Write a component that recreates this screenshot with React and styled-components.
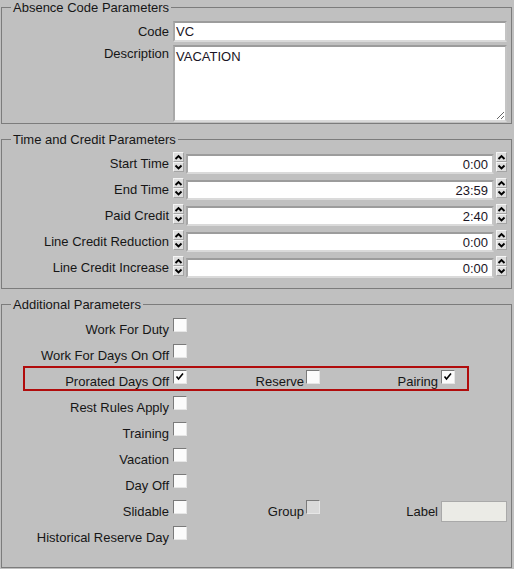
import React from 'react';
import styled, { createGlobalStyle } from 'styled-components';

const GlobalStyle = createGlobalStyle`
  html, body {
    margin: 0;
    padding: 0;
    background: #c0c0c0;
  }
  body {
    font-family: "Liberation Sans", Arial, sans-serif;
    font-size: 13px;
    line-height: 15px;
    color: #161616;
  }
  * { box-sizing: border-box; }
`;

const timeRows = [
  { label: 'Start Time', value: '0:00' },
  { label: 'End Time', value: '23:59' },
  { label: 'Paid Credit', value: '2:40' },
  { label: 'Line Credit Reduction', value: '0:00' },
  { label: 'Line Credit Increase', value: '0:00' },
];

function Chevron({ down }) {
  return (
    <svg width="9" height="7" viewBox="0 0 9 7">
      <polyline
        points={down ? '1.5,1.5 4.5,4.5 7.5,1.5' : '1.5,5 4.5,2 7.5,5'}
        fill="none"
        stroke="#000"
        strokeWidth="1.9"
      />
    </svg>
  );
}

function Spinner({ $right }) {
  return (
    <SpinBox $right={$right}>
      <SpinButton><Chevron /></SpinButton>
      <SpinButton><Chevron down /></SpinButton>
    </SpinBox>
  );
}

function Check({ checked, disabled }) {
  return (
    <CheckBox $disabled={disabled}>
      {checked && (
        <svg width="12" height="12" viewBox="0 0 12 12">
          <polyline points="2.5,5.5 4.5,8 9,2.5" fill="none" stroke="#000" strokeWidth="1.6" />
        </svg>
      )}
    </CheckBox>
  );
}

function App() {
  return (
    <>
      <GlobalStyle />
      <Page>
        <Group>
          <Legend>Absence Code Parameters</Legend>
          <CodeGrid>
            <FieldLabel>Code</FieldLabel>
            <TextBox readOnly value="VC" />
            <FieldLabel $top>Description</FieldLabel>
            <TextArea readOnly value="VACATION" />
          </CodeGrid>
        </Group>

        <Group $pb={10}>
          <Legend>Time and Credit Parameters</Legend>
          <TimeList>
            {timeRows.map(row => (
              <TimeRow key={row.label}>
                <FieldLabel>{row.label}</FieldLabel>
                <Spinner />
                <TimeBox readOnly value={row.value} />
                <Spinner $right />
              </TimeRow>
            ))}
          </TimeList>
        </Group>

        <Group $pb={15}>
          <Legend>Additional Parameters</Legend>
          <CheckList>
            <CheckRow>
              <CheckLabel>Work For Duty</CheckLabel>
              <Check />
            </CheckRow>
            <CheckRow>
              <CheckLabel>Work For Days On Off</CheckLabel>
              <Check />
            </CheckRow>
            <CheckRow $framed>
              <CheckLabel>Prorated Days Off</CheckLabel>
              <Check checked />
              <CheckLabel $pad={2}>Reserve</CheckLabel>
              <Check />
              <CheckLabel $pad={3}>Pairing</CheckLabel>
              <Check checked />
            </CheckRow>
            <CheckRow>
              <CheckLabel>Rest Rules Apply</CheckLabel>
              <Check />
            </CheckRow>
            <CheckRow>
              <CheckLabel>Training</CheckLabel>
              <Check />
            </CheckRow>
            <CheckRow>
              <CheckLabel>Vacation</CheckLabel>
              <Check />
            </CheckRow>
            <CheckRow>
              <CheckLabel>Day Off</CheckLabel>
              <Check />
            </CheckRow>
            <CheckRow>
              <CheckLabel>Slidable</CheckLabel>
              <Check />
              <CheckLabel $pad={2}>Group</CheckLabel>
              <Check disabled />
              <CheckLabel $pad={3}>Label</CheckLabel>
              <DisabledBox readOnly value="" />
            </CheckRow>
            <CheckRow>
              <CheckLabel>Historical Reserve Day</CheckLabel>
              <Check />
            </CheckRow>
          </CheckList>
        </Group>
      </Page>
    </>
  );
}

const Page = styled.div`
  width: 514px;
  padding: 0 2px 0 1px;
  display: flex;
  flex-direction: column;
  gap: 8px;
`;

const Group = styled.fieldset`
  margin: 0;
  padding: 0 3px ${p => p.$pb ?? 1}px 0;
  border: 1px solid #7c7c7c;
  min-width: 0;
`;

const Legend = styled.legend`
  margin-left: 9px;
  padding: 0 2px;
  font-size: 13px;
  line-height: 15px;
  color: #161616;
`;

const CodeGrid = styled.div`
  display: grid;
  grid-template-columns: 171px 1fr;
  row-gap: 3px;
  padding-top: 6px;
`;

const FieldLabel = styled.div`
  text-align: right;
  padding-right: 4px;
  white-space: nowrap;
  align-self: ${p => (p.$top ? 'start' : 'center')};
  padding-top: ${p => (p.$top ? '1px' : '0')};
`;

const inputBorder = `
  border-style: solid;
  border-width: 2px;
  border-color: #9c9c9c #c4c4c4 #dadada #a8a8a8;
  background: #fff;
  font-family: "Liberation Sans", Arial, sans-serif;
  font-size: 13px;
  color: #1a1424;
  outline: none;
  margin: 0;
`;

const TextBox = styled.input`
  ${inputBorder}
  height: 21px;
  width: 334px;
  padding: 0 1px;
`;

const TextArea = styled.textarea`
  ${inputBorder}
  height: 77px;
  width: 334px;
  padding: 2px 1px;
  resize: both;
  line-height: 15px;
`;

const TimeList = styled.div`
  display: flex;
  flex-direction: column;
  gap: 4px;
  padding-top: 5px;
`;

const TimeRow = styled.div`
  display: grid;
  grid-template-columns: 171px 13px 308px 13px;
  height: 22px;
  align-items: center;
`;

const TimeBox = styled.input`
  ${inputBorder}
  height: 20px;
  width: 308px;
  padding: 0 4px 0 2px;
  text-align: right;
  align-self: start;
  margin-top: 2px;
`;

const SpinBox = styled.div`
  display: flex;
  flex-direction: column;
  align-self: start;
  width: 12px;
  margin-left: ${p => (p.$right ? '2px' : '0')};
`;

const SpinButton = styled.div`
  height: 10px;
  width: 11px;
  display: flex;
  align-items: center;
  justify-content: center;
  background: #dedede;
  border-top: 1px solid #f4f4f4;
  border-left: 1px solid #f4f4f4;
  border-bottom: 1px solid #a4a4a4;
  border-right: 1px solid #a4a4a4;
`;

const CheckList = styled.div`
  display: flex;
  flex-direction: column;
  padding-top: 6px;
`;

const CheckRow = styled.div`
  display: grid;
  grid-template-columns: ${p => (p.$framed ? '148px' : '171px')} 14px 119px 14px 121px 66px;
  align-items: start;
  height: ${p => (p.$framed ? '25px' : '26px')};
  ${p => p.$framed && `
    margin: -4px 0 5px 21px;
    width: 446px;
    border: 2px solid #b10c0c;
    padding-top: 2px;
  `}
`;

const CheckLabel = styled.div`
  text-align: right;
  white-space: nowrap;
  padding-right: ${p => p.$pad ?? 4}px;
  padding-top: 4px;
`;

const CheckBox = styled.span`
  display: flex;
  width: 14px;
  height: 14px;
  background: ${p => (p.$disabled ? '#d9d9d9' : '#fbfbfb')};
  border-top: 1px solid #7a7a7a;
  border-left: 1px solid #7a7a7a;
  border-right: 1px solid #e6e6e6;
  border-bottom: 1px solid #e6e6e6;
  align-items: flex-start;
  justify-content: flex-start;
`;

const DisabledBox = styled.input`
  height: 21px;
  width: 66px;
  margin: 1px 0 0;
  padding: 0 2px;
  border: 1px solid #a9a9a9;
  background: #ebebe6;
  outline: none;
`;

export default App;
